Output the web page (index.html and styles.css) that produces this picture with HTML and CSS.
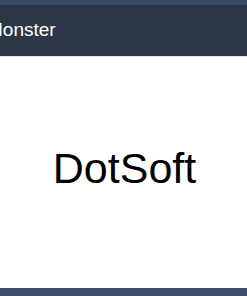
FILE: index.html
```html
<!DOCTYPE html>
<html>
<head>
<meta charset="utf-8">
<link rel="stylesheet" href="styles.css">
</head>
<body>
<div class="page">
  <div class="topband"></div>
  <header class="header"><span class="title">Monster</span></header>
  <main class="content"><div class="brand">DotSoft</div></main>
  <footer class="footer"></footer>
</div>
</body>
</html>
```
FILE: styles.css
```css
html, body {
  margin: 0;
  padding: 0;
  width: 247px;
  height: 296px;
  overflow: hidden;
  background: #ffffff;
  font-family: "Liberation Sans", Arial, sans-serif;
}
.page {
  display: flex;
  flex-direction: column;
  height: 296px;
}
.topband {
  height: 5px;
  background: #3b4866;
}
.header {
  height: 51px;
  background: #2d3748;
  border-bottom: 1px solid #e2e8f0;
  display: flex;
  align-items: center;
  overflow: hidden;
}
.title {
  color: #ffffff;
  font-size: 19px;
  margin-left: -13px;
  margin-top: -2px;
}
.content {
  flex: 1;
  display: flex;
  align-items: center;
  justify-content: center;
}
.brand {
  font-size: 43px;
  color: #000000;
  margin-top: -8px;
  margin-left: 2px;
}
.footer {
  height: 8px;
  background: #3d4a68;
}
```
